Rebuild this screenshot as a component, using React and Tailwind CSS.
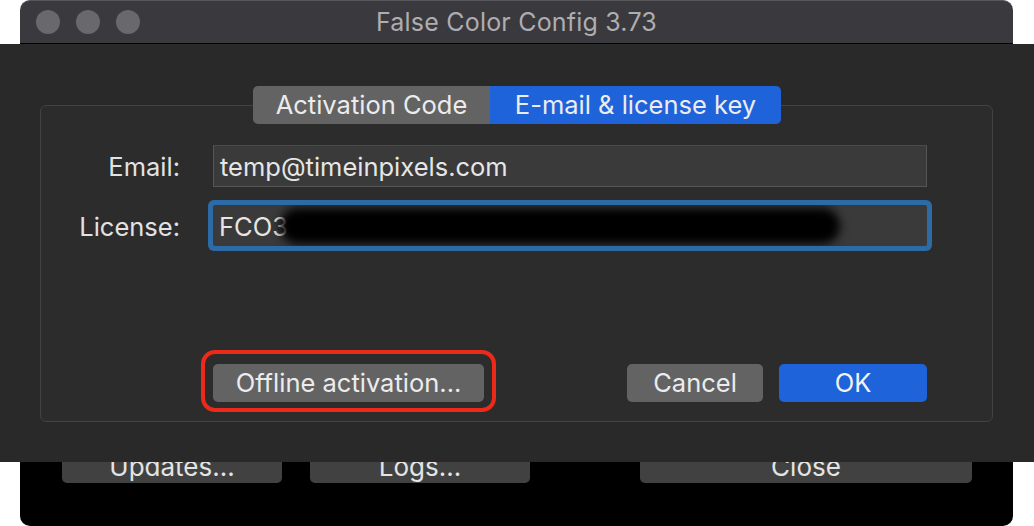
import React from 'react';

const font = { fontFamily: 'Inter, "Noto Sans", sans-serif' };

function TrafficLight() {
  return <span className="block w-[24px] h-[24px] rounded-full bg-[#69686c]" />;
}

function BackButton({ children, className }) {
  return (
    <div className={`h-[38px] rounded-[5px] bg-[#414141] text-[#e4e4e4] text-[26px] flex items-center justify-center pt-[5px] ${className}`}>
      {children}
    </div>
  );
}

export default function App() {
  return (
    <div className="relative w-[1034px] h-[526px] bg-white overflow-hidden" style={font}>
      {/* window behind the sheet */}
      <div className="ml-[20px] w-[993px] h-[526px] flex flex-col">
        <div className="relative h-[44px] rounded-t-[10px] bg-[#3a393d] border-t border-[#58575b] border-b border-b-black flex items-center px-[16px] gap-[16px]">
          <TrafficLight />
          <TrafficLight />
          <TrafficLight />
          <div className="absolute inset-0 pt-[1px] flex items-center justify-center text-[25px] text-[#aeadb1] tracking-[0.2px]">
            False Color Config 3.73
          </div>
        </div>
        <div className="flex-1 bg-black rounded-b-[10px] flex pt-[401px] pl-[42px]">
          <BackButton className="w-[220px]">Updates...</BackButton>
          <BackButton className="w-[220px] ml-[28px]">Logs...</BackButton>
          <BackButton className="w-[332px] ml-[110px]">Close</BackButton>
        </div>
      </div>

      {/* activation sheet */}
      <div className="absolute left-0 top-[44px] w-[1034px] h-[418px] bg-[#292929] pt-[42px] px-[40px]">
        <div className="relative z-10 flex justify-center -mb-[19px]">
          <div className="flex h-[38px] rounded-[5px] overflow-hidden text-[25.5px] text-[#ececec]">
            <div className="w-[237px] bg-[#636363] flex items-center justify-center">Activation Code</div>
            <div className="w-[291px] bg-[#1f63db] flex items-center justify-center">E-mail &amp; license key</div>
          </div>
        </div>

        <div className="w-[953px] h-[317px] border border-[#424242] rounded-[6px] bg-[#2c2c2c] pt-[39px] text-[25.5px] text-[#e2e2e2]">
          <div className="flex items-center h-[42px]">
            <div className="w-[139px] text-right pt-[3px]">Email:</div>
            <div className="ml-[33px] w-[714px] h-[42px] bg-[#3a3a3a] border border-[#565656] border-t-[#4a4a4a] flex items-center pt-[3px] px-[6px] text-[#e6e6e6]">
              temp@timeinpixels.com
            </div>
          </div>

          <div className="flex items-center h-[41px] mt-[18px]">
            <div className="w-[139px] text-right pt-[3px]">License:</div>
            <div className="relative ml-[33px] w-[714px] h-[41px] bg-[#3a3a3a] rounded-[2px] shadow-[0_0_0_5px_#2d6ba6] flex items-center pt-[3px] px-[6px] text-[#e6e6e6] overflow-hidden">
              FCO3
              <div className="absolute left-[67px] top-[3px] w-[560px] h-[36px] rounded-full bg-black blur-[5px]" />
            </div>
          </div>

          <div className="flex justify-between items-center w-[714px] ml-[172px] mt-[118px]">
            <div className="relative">
              <div className="w-[271px] h-[38px] rounded-[5px] bg-[#636363] flex items-center justify-center text-[#ececec]">
                Offline activation...
              </div>
              <div className="absolute -left-[12px] -right-[12px] -top-[14px] -bottom-[10px] border-[4px] border-[#ec2a1a] rounded-[14px]" />
            </div>
            <div className="flex gap-[16px]">
              <div className="w-[136px] h-[38px] rounded-[5px] bg-[#636363] flex items-center justify-center text-[#ececec]">
                Cancel
              </div>
              <div className="w-[148px] h-[38px] rounded-[5px] bg-[#1f63db] flex items-center justify-center text-[#f2f2f2]">
                OK
              </div>
            </div>
          </div>
        </div>
      </div>
    </div>
  );
}
